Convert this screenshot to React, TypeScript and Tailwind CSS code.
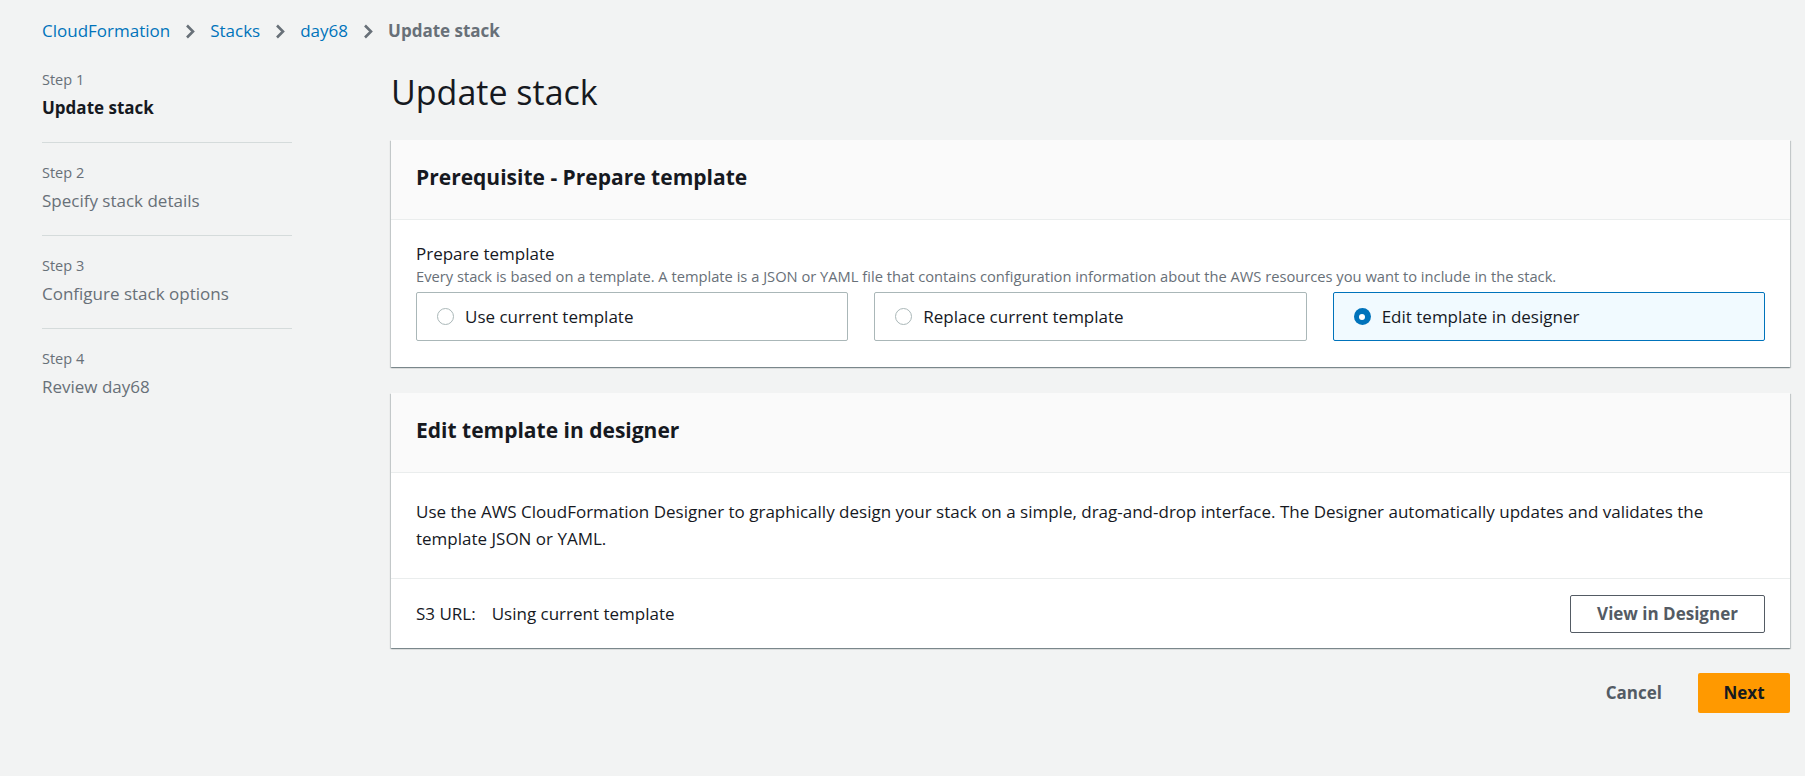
const font = { fontFamily: '"Open Sans", "Noto Sans", Arial, sans-serif' };

function Chevron() {
  return (
    <svg width="10" height="15" viewBox="0 0 10 15" className="shrink-0">
      <path d="M2 1.5 L8 7.5 L2 13.5" fill="none" stroke="#687078" strokeWidth="2.6" />
    </svg>
  );
}

function Radio({ checked }: { checked?: boolean }) {
  if (checked) {
    return (
      <span className="flex h-[17px] w-[17px] shrink-0 items-center justify-center rounded-full bg-[#0073bb]">
        <span className="h-[6px] w-[6px] rounded-full bg-white" />
      </span>
    );
  }
  return <span className="h-[17px] w-[17px] shrink-0 rounded-full border-[1.5px] border-[#aab7b8] bg-white" />;
}

function Tile({ label, checked }: { label: string; checked?: boolean }) {
  return (
    <div
      className={
        checked
          ? 'flex h-[49px] items-center gap-[11px] rounded-[2px] border border-[#0073bb] bg-[#f1faff] pl-[20px]'
          : 'flex h-[49px] items-center gap-[11px] rounded-[2px] border border-[#aab7b8] bg-white pl-[20px]'
      }
    >
      <Radio checked={checked} />
      <span className="text-[17px] leading-6 text-[#16191f]">{label}</span>
    </div>
  );
}

const steps = [
  { n: 'Step 1', title: 'Update stack', active: true },
  { n: 'Step 2', title: 'Specify stack details' },
  { n: 'Step 3', title: 'Configure stack options' },
  { n: 'Step 4', title: 'Review day68' },
];

export default function App() {
  return (
    <div className="min-h-[776px] w-full bg-[#f2f3f3] pl-[42px] pr-[15px]" style={font}>
      {/* Breadcrumbs */}
      <nav className="flex h-[42px] items-center gap-[15px] pt-[20px] text-[17px] leading-6">
        <span className="text-[#0073bb]">CloudFormation</span>
        <Chevron />
        <span className="text-[#0073bb]">Stacks</span>
        <Chevron />
        <span className="text-[#0073bb]">day68</span>
        <Chevron />
        <span className="font-bold text-[#687078]">Update stack</span>
      </nav>

      <div className="flex gap-[99px]">
        {/* Wizard steps */}
        <aside className="w-[250px] shrink-0 pt-[28px]">
          {steps.map((s, i) => (
            <div key={s.n} className={i < 3 ? 'border-b border-[#d5dbdb] pb-[22px] pt-[20px] first:pt-0' : 'pt-[20px]'}>
              <div className="text-[14.5px] leading-5 text-[#687078]">{s.n}</div>
              <div
                className={
                  s.active
                    ? 'mt-[6px] text-[17px] font-bold leading-6 text-[#16191f]'
                    : 'mt-[6px] text-[17px] leading-6 text-[#687078]'
                }
              >
                {s.title}
              </div>
            </div>
          ))}
        </aside>

        {/* Main */}
        <main className="flex-1">
          <h1 className="pt-[30px] text-[34px] font-normal leading-10 text-[#16191f]">Update stack</h1>

          <section className="mt-[28px] bg-white shadow-[0_1px_1px_0_rgba(0,28,36,0.3),1px_1px_1px_0_rgba(0,28,36,0.15),-1px_1px_1px_0_rgba(0,28,36,0.15)]">
            <div className="flex h-[80px] items-center border-b border-[#eaeded] bg-[#fafafa] px-[25px] pb-[3px]">
              <h2 className="text-[21px] font-bold text-[#16191f]">Prerequisite - Prepare template</h2>
            </div>
            <div className="px-[25px] pb-[26px] pt-[24px]">
              <div className="text-[17px] leading-5 text-[#16191f]">Prepare template</div>
              <div className="mt-[3px] text-[14.7px] leading-[18px] text-[#687078]">
                Every stack is based on a template. A template is a JSON or YAML file that contains configuration information about the AWS resources you want to include in the stack.
              </div>
              <div className="mt-[7px] grid grid-cols-3 gap-[26px]">
                <Tile label="Use current template" />
                <Tile label="Replace current template" />
                <Tile label="Edit template in designer" checked />
              </div>
            </div>
          </section>

          <section className="mt-[26px] bg-white shadow-[0_1px_1px_0_rgba(0,28,36,0.3),1px_1px_1px_0_rgba(0,28,36,0.15),-1px_1px_1px_0_rgba(0,28,36,0.15)]">
            <div className="flex h-[80px] items-center border-b border-[#eaeded] bg-[#fafafa] px-[25px] pb-[3px]">
              <h2 className="text-[21px] font-bold text-[#16191f]">Edit template in designer</h2>
            </div>
            <div className="border-b border-[#eaeded] px-[25px] py-[26px] text-[17px] leading-[26.5px] text-[#16191f]">
              Use the AWS CloudFormation Designer to graphically design your stack on a simple, drag-and-drop interface. The Designer automatically updates and validates the template JSON or YAML.
            </div>
            <div className="flex h-[69px] items-center justify-between px-[25px]">
              <div className="flex gap-[16px] text-[17px] text-[#16191f]">
                <span>S3 URL:</span>
                <span>Using current template</span>
              </div>
              <button className="h-[38px] w-[195px] rounded-[2px] border border-[#545b64] bg-white text-[17px] font-bold text-[#545b64]">
                View in Designer
              </button>
            </div>
          </section>

          <div className="mt-[25px] flex items-center justify-end gap-[16px]">
            <button className="h-[40px] px-[20px] text-[17px] font-bold text-[#545b64]">Cancel</button>
            <button className="h-[40px] w-[92px] rounded-[2px] bg-[#ff9900] text-[17px] font-bold text-[#16191f]">Next</button>
          </div>
        </main>
      </div>
    </div>
  );
}
